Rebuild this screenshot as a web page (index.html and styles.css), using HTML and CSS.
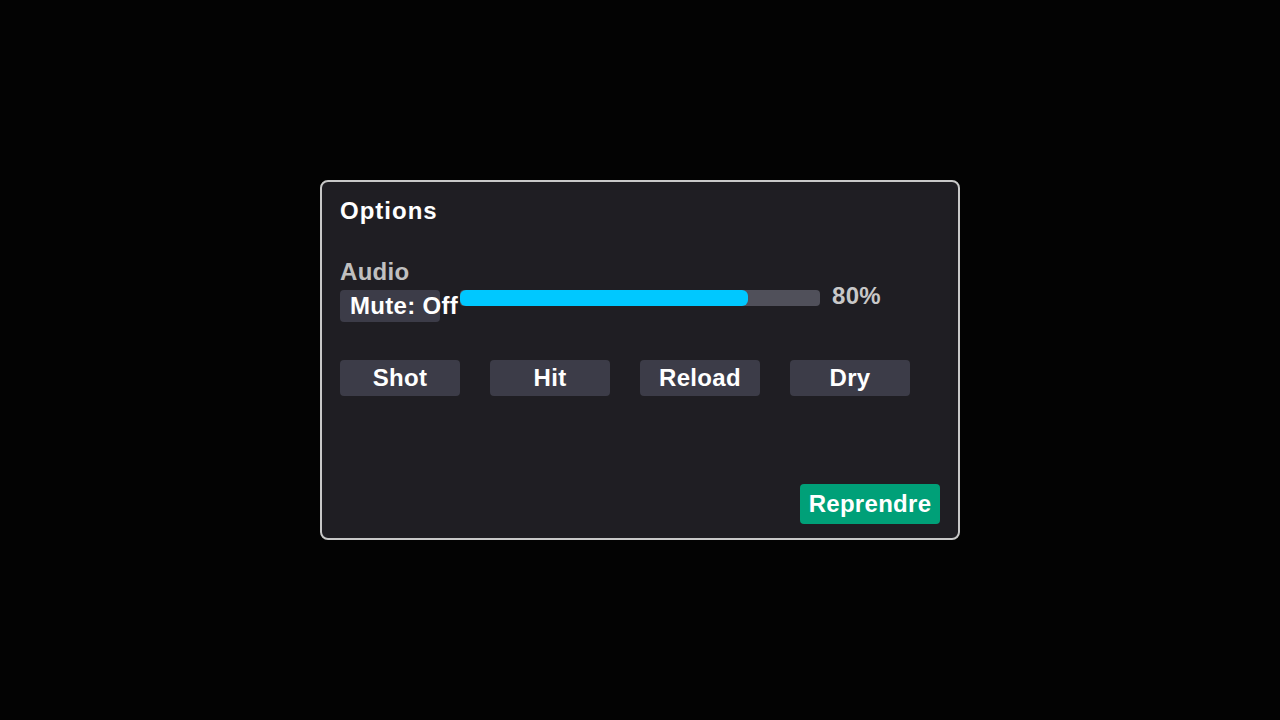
FILE: index.html
```html
<!DOCTYPE html>
<html lang="fr">
<head>
<meta charset="utf-8">
<title>Options</title>
<link rel="stylesheet" href="styles.css">
</head>
<body>
<div class="stage">
  <div class="panel">
    <div class="title">Options</div>
    <div class="section">Audio</div>
    <div class="audio-row">
      <div class="mute">Mute: Off</div>
      <div class="slider"><div class="fill" style="width: 80%"></div></div>
      <div class="pct">80%</div>
    </div>
    <div class="sounds">
      <div class="btn">Shot</div>
      <div class="btn">Hit</div>
      <div class="btn">Reload</div>
      <div class="btn">Dry</div>
    </div>
    <div class="resume">Reprendre</div>
  </div>
</div>
</body>
</html>
```

FILE: styles.css
```css
html, body {
  margin: 0;
  padding: 0;
  background: #030303;
}
body {
  font-family: "Liberation Sans", Arial, sans-serif;
  font-weight: bold;
  font-size: 24px;
  letter-spacing: 0.3px;
  color: #ffffff;
}
.stage {
  width: 1280px;
  height: 720px;
  display: flex;
  align-items: center;
  justify-content: center;
}
.panel {
  box-sizing: border-box;
  width: 640px;
  height: 360px;
  background: #1f1e23;
  border: 2px solid #c8c8c8;
  border-radius: 8px;
  padding: 15px 18px 14px 18px;
  display: flex;
  flex-direction: column;
}
.title {
  line-height: 28px;
  letter-spacing: 1px;
}
.section {
  margin-top: 33px;
  line-height: 28px;
  color: #c0c0c0;
}
.audio-row {
  margin-top: 4px;
  display: flex;
  align-items: flex-start;
}
.mute {
  width: 100px;
  height: 32px;
  box-sizing: border-box;
  padding-left: 10px;
  line-height: 31px;
  background: #3c3c48;
  border-radius: 4px;
  white-space: nowrap;
  overflow: visible;
  flex-shrink: 0;
}
.slider {
  margin-left: 20px;
  width: 360px;
  height: 16px;
  background: #50505a;
  border-radius: 4px;
  flex-shrink: 0;
  position: relative;
  z-index: 1;
}
.fill {
  height: 100%;
  background: #00c8ff;
  border-radius: 6px;
}
.pct {
  margin-left: 12px;
  margin-top: -2px;
  line-height: 16px;
  color: #c8c8c8;
}
.sounds {
  margin-top: 38px;
  display: flex;
  gap: 30px;
}
.btn {
  width: 120px;
  height: 36px;
  line-height: 36px;
  text-align: center;
  background: #3c3c48;
  border-radius: 4px;
}
.resume {
  margin-top: auto;
  align-self: flex-end;
  width: 140px;
  height: 40px;
  line-height: 40px;
  text-align: center;
  background: #00a078;
  border-radius: 4px;
}
```
